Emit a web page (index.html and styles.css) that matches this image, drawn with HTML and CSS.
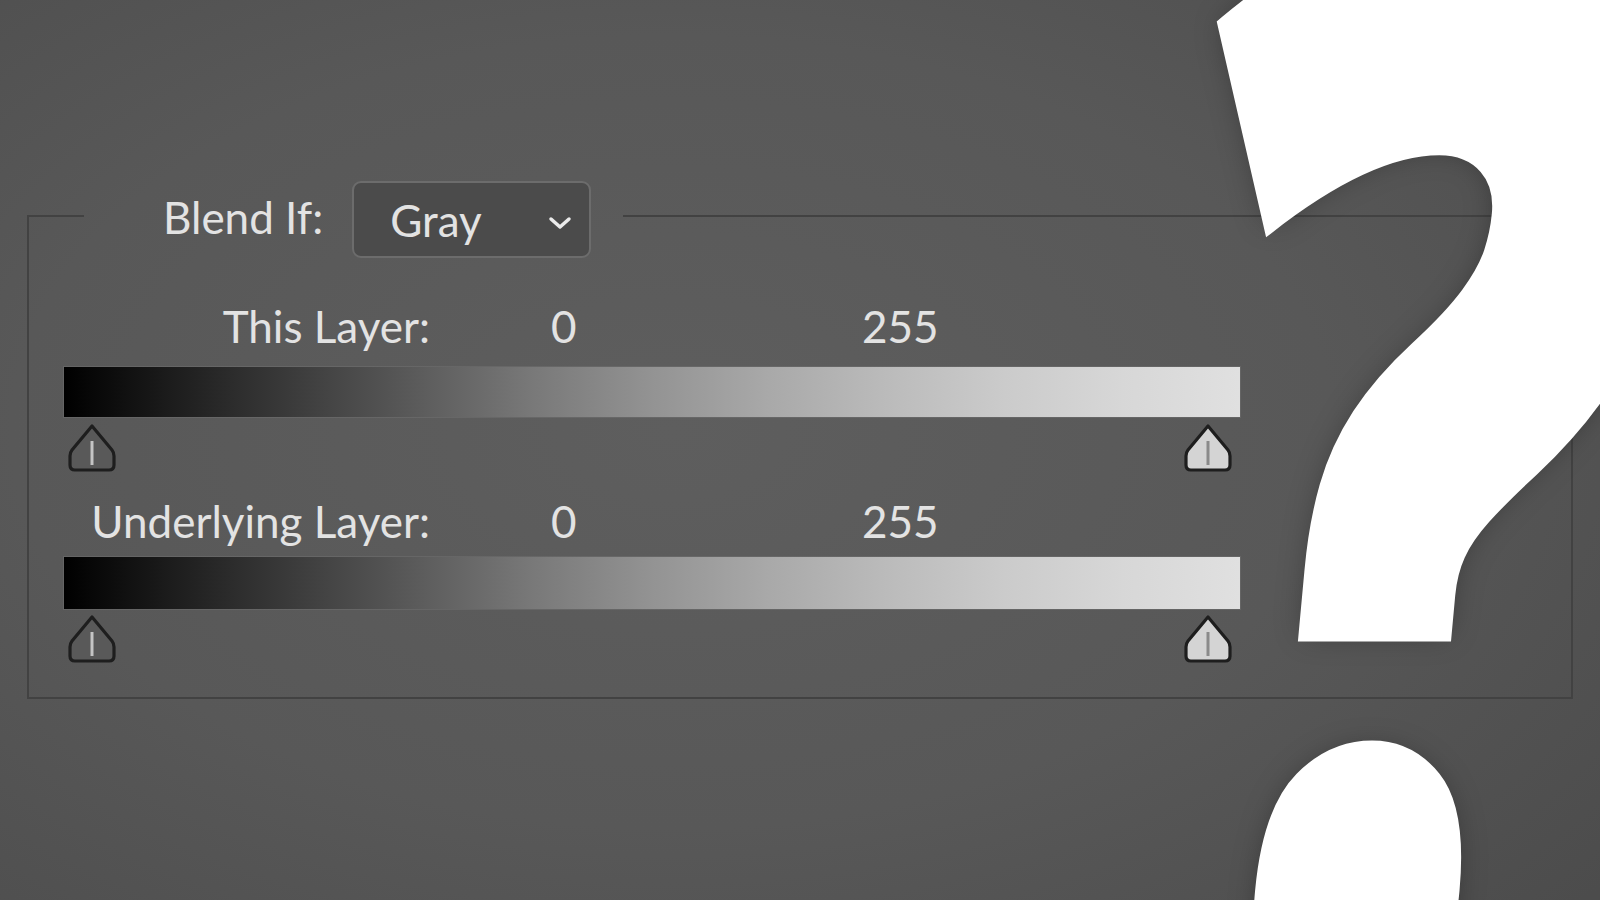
FILE: index.html
```html
<!DOCTYPE html>
<html lang="en">
<head>
    <meta charset="UTF-8">
    <meta name="viewport" content="width=device-width, initial-scale=1.0">
    <title>Blend If</title>
    <link rel="stylesheet" href="styles.css">
</head>
<body>
    <main class="stage">
        <fieldset class="blend">
            <legend class="blend-head">
                <span class="blend-label">Blend If:</span>
                <div class="dropdown">
                    <span>Gray</span>
                    <svg class="chevron" width="26" height="16" viewBox="0 0 26 16">
                        <path d="M4 4 L13 12 L22 4" fill="none" stroke="#ececec" stroke-width="3.5" stroke-linecap="round" stroke-linejoin="round"/>
                    </svg>
                </div>
            </legend>

            <!-- this layer -->
            <div class="levels levels-top">
                <span class="levels-name">This Layer:</span>
                <span class="levels-low">0</span>
                <span class="levels-high">255</span>
            </div>
            <div class="ramp"></div>
            <div class="knobs">
                <svg class="knob" width="50" height="50" viewBox="0 0 50 50">
                    <path d="M25 3 L45 27 Q47 29.5 47 33 L47 42 Q47 47 42 47 L8 47 Q3 47 3 42 L3 33 Q3 29.5 5 27 Z" fill="#595959" stroke="#1e1e1e" stroke-width="3.2" stroke-linejoin="round"/>
                    <rect x="23.5" y="18" width="3" height="24" fill="#c4c4c4"/>
                </svg>
                <svg class="knob" width="50" height="50" viewBox="0 0 50 50">
                    <path d="M25 3 L45 27 Q47 29.5 47 33 L47 42 Q47 47 42 47 L8 47 Q3 47 3 42 L3 33 Q3 29.5 5 27 Z" fill="#d4d4d4" stroke="#1e1e1e" stroke-width="3.2" stroke-linejoin="round"/>
                    <rect x="23.5" y="18" width="3" height="24" fill="#8a8a8a"/>
                </svg>
            </div>

            <!-- underlying layer -->
            <div class="levels levels-bottom">
                <span class="levels-name">Underlying Layer:</span>
                <span class="levels-low">0</span>
                <span class="levels-high">255</span>
            </div>
            <div class="ramp ramp-bottom"></div>
            <div class="knobs knobs-bottom">
                <svg class="knob" width="50" height="50" viewBox="0 0 50 50">
                    <path d="M25 3 L45 27 Q47 29.5 47 33 L47 42 Q47 47 42 47 L8 47 Q3 47 3 42 L3 33 Q3 29.5 5 27 Z" fill="#595959" stroke="#1e1e1e" stroke-width="3.2" stroke-linejoin="round"/>
                    <rect x="23.5" y="18" width="3" height="24" fill="#c4c4c4"/>
                </svg>
                <svg class="knob" width="50" height="50" viewBox="0 0 50 50">
                    <path d="M25 3 L45 27 Q47 29.5 47 33 L47 42 Q47 47 42 47 L8 47 Q3 47 3 42 L3 33 Q3 29.5 5 27 Z" fill="#d4d4d4" stroke="#1e1e1e" stroke-width="3.2" stroke-linejoin="round"/>
                    <rect x="23.5" y="18" width="3" height="24" fill="#8a8a8a"/>
                </svg>
            </div>
        </fieldset>

        <div class="mark">?</div>
    </main>
</body>
</html>
```

FILE: styles.css
```css
html, body {
    margin: 0;
    height: 100%;
}
body {
    font-family: Lato, "Noto Sans", sans-serif;
    background: radial-gradient(ellipse 75% 80% at 42% 48%, #5e5e5e 0%, #585858 55%, #4c4c4c 100%);
    color: #e3e3e3;
    overflow: hidden;
}
.stage {
    position: relative;
    height: 100%;
    padding-top: 181px;
    box-sizing: border-box;
}
.blend {
    margin: 0 27px;
    padding: 0 0 33px 35px;
    border: 2px solid #424242;
    min-width: 0;
}
.blend-head {
    display: flex;
    align-items: flex-start;
    gap: 29px;
    height: 70px;
    margin-left: 20px;
    padding: 0 32px 0 79px;
    font-size: 44px;
}
.blend-label {
    line-height: 72px;
}
.dropdown {
    display: flex;
    align-items: center;
    justify-content: space-between;
    box-sizing: border-box;
    width: 239px;
    height: 77px;
    padding: 0 16px 0 36px;
    border: 2px solid #6c6c6c;
    border-radius: 9px;
    background: #4b4b4b;
}
.chevron {
    margin-top: 6px;
}
.levels {
    display: flex;
    height: 54px;
    line-height: 54px;
    font-size: 44px;
}
.levels-top {
    margin-top: 48px;
}
.levels-bottom {
    margin-top: 21px;
}
.levels-name {
    width: 366px;
    text-align: right;
}
.levels-low {
    width: 311px;
    margin-left: 121px;
}
.ramp {
    width: 1176px;
    height: 50px;
    margin-top: 14px;
    background: linear-gradient(to right, #000 0%, #1f1f1f 10%, #3d3d3d 20%, #5b5b5b 30%, #797979 40%, #939393 50%, #a9a9a9 60%, #bbb 70%, #cbcbcb 80%, #d7d7d7 90%, #e0e0e0 100%);
    box-shadow: 0 0 0 1px rgba(110, 110, 110, 0.6);
}
.ramp-bottom {
    height: 52px;
    margin-top: 9px;
}
.knobs {
    display: flex;
    justify-content: space-between;
    width: 1176px;
    box-sizing: border-box;
    height: 50px;
    margin-top: 6px;
    padding: 0 7px 0 3px;
}
.knobs-bottom {
    margin-top: 5px;
}
.knob {
    display: block;
}
/* big stretched question mark over the right side */
.mark {
    position: absolute;
    top: -326px;
    left: 1256px;
    font-family: "Open Sans", sans-serif;
    font-weight: 800;
    font-size: 1030px;
    line-height: 1030px;
    color: #fff;
    -webkit-text-stroke: 12px #fff;
    text-shadow: 0 0 26px rgba(0, 0, 0, 0.35);
    transform-origin: 0 0;
    transform: skewX(-5.26deg) scale(0.92, 1.465);
    pointer-events: none;
}
```
